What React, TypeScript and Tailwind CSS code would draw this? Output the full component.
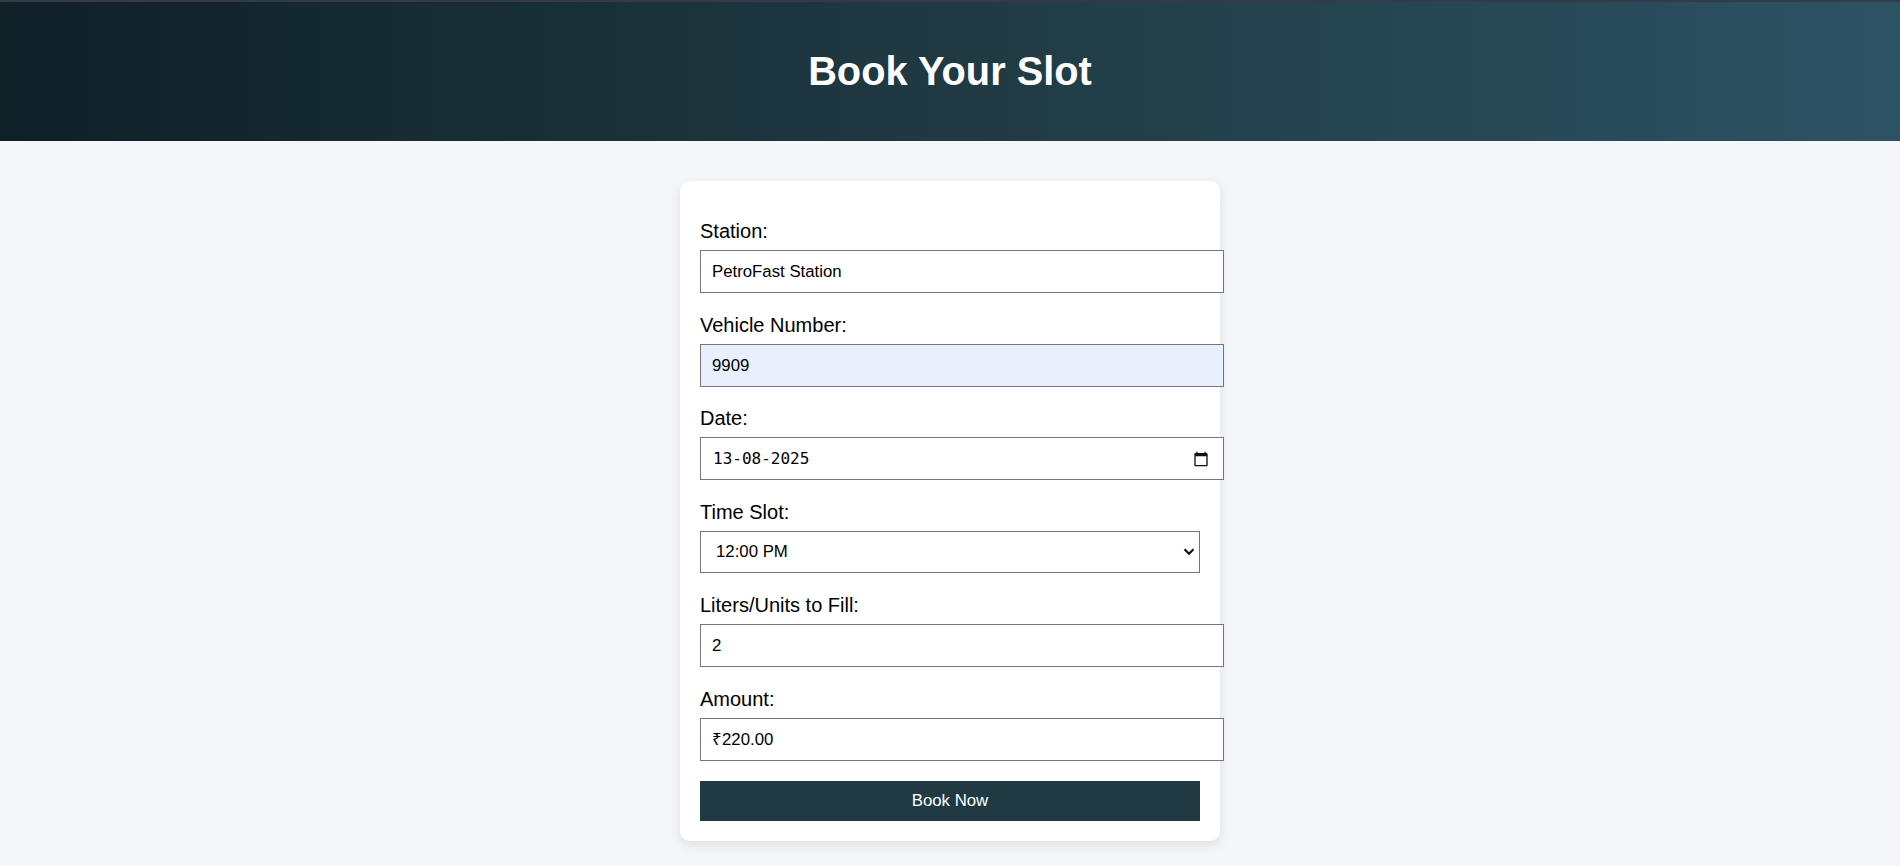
import React from "react";

const FONT = "font-['Liberation_Sans',Arial,sans-serif]";

const Field: React.FC<{ label: string; children: React.ReactNode; className?: string }> = ({ label, children, className }) => (
  <div className={className ?? "mb-[20.5px]"}>
    <label className="block text-[20px] leading-[22px] text-black mb-[8px]">{label}</label>
    {children}
  </div>
);

const inputCls =
  "box-content block w-full h-[19px] p-[11px] border border-[#767676] text-[16.8px] leading-[19px] text-black outline-none";

const App: React.FC = () => {
  return (
    <div className={`min-h-screen bg-[#f4f6f9] ${FONT}`}>
      <div className="h-[2px] bg-[#363948]" />
      <header className="h-[139px] flex items-center justify-center bg-gradient-to-r from-[#0f2027] via-[#203a43] to-[#2c5364]">
        <h1 className="text-[39.8px] font-bold text-white leading-none">Book Your Slot</h1>
      </header>

      <div className="w-[540px] mx-auto mt-[40px] bg-white rounded-[10px] shadow-[0_4px_12px_rgba(0,0,0,0.1)] pt-[39px] px-[20px] pb-[20px]">
        <form onSubmit={(e) => e.preventDefault()}>
          <Field label="Station:">
            <input className={`${inputCls} bg-white`} defaultValue="PetroFast Station" readOnly />
          </Field>

          <Field label="Vehicle Number:">
            <input className={`${inputCls} bg-[#e8f0fe]`} defaultValue="9909" readOnly />
          </Field>

          <Field label="Date:">
            <div className="box-content w-full h-[19px] p-[11px] border border-[#767676] bg-white flex items-center justify-between">
              <span className="ml-[1px] font-['DejaVu_Sans_Mono',monospace] text-[16px] text-black">13-08-2025</span>
              <svg className="mr-[3px]" width="16" height="16" viewBox="0 0 24 24" fill="#111">
                <path d="M20 3h-1V1h-2v2H7V1H5v2H4c-1.1 0-2 .9-2 2v16c0 1.1.9 2 2 2h16c1.1 0 2-.9 2-2V5c0-1.1-.9-2-2-2zm0 18H4V8h16v13z" />
              </svg>
            </div>
          </Field>

          <Field label="Time Slot:" className="mb-[21.5px]">
            <div className="relative w-full">
              <select
                className="appearance-none block w-full h-[42px] pl-[15px] pr-[30px] border border-[#767676] bg-white text-[16.8px] text-black outline-none rounded-none"
                defaultValue="12:00 PM"
              >
                <option>10:00 AM</option>
                <option>11:00 AM</option>
                <option>12:00 PM</option>
                <option>01:00 PM</option>
              </select>
              <svg
                className="absolute right-[5px] top-1/2 -translate-y-1/2 pointer-events-none"
                width="12"
                height="8"
                viewBox="0 0 12 8"
                fill="none"
                stroke="#111"
                strokeWidth="2.2"
              >
                <path d="M1.5 1.3 L6 5.8 L10.5 1.3" />
              </svg>
            </div>
          </Field>

          <Field label="Liters/Units to Fill:">
            <input className={`${inputCls} bg-white`} defaultValue="2" readOnly />
          </Field>

          <Field label="Amount:">
            <input className={`${inputCls} bg-white`} defaultValue="₹220.00" readOnly />
          </Field>

          <button
            type="submit"
            className="block w-full h-[40px] bg-[#203a43] text-white text-[16.8px] border-0"
          >
            Book Now
          </button>
        </form>
      </div>
    </div>
  );
};

export default App;
